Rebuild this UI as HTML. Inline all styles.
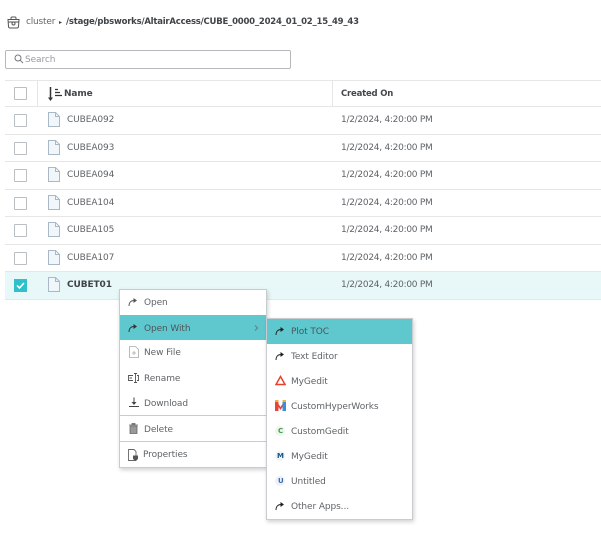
<!DOCTYPE html>
<html><head><meta charset="utf-8"><style>
html,body{margin:0;padding:0;background:#fff}
#p{position:relative;width:601px;height:541px;overflow:hidden;background:#fff;font-family:"DejaVu Sans","Liberation Sans",sans-serif;font-size:9px;color:#5f6468;filter:blur(.3px)}
.a{position:absolute}
.t{position:absolute;white-space:nowrap;line-height:12px;margin-top:1px;letter-spacing:-.1px}
.d{letter-spacing:-.27px}
.l{position:absolute;height:1px;background:#e6e6e6}
.cb{position:absolute;left:14px;width:11px;height:11px;border:1px solid #b9bfc3;border-radius:1px;background:#fff}
svg{position:absolute;overflow:visible}
.menu{position:absolute;background:#fff;border:1px solid #c9cccf;box-shadow:1px 2px 4px rgba(0,0,0,.18)}
.hl{position:absolute;background:#5fc8cf}
</style></head><body><div id="p">
<svg style="left:7px;top:16px" width="13" height="13" viewBox="0 0 13 13" fill="none" stroke="#555" stroke-width="1"><path d="M4 3.500V2.200Q4 1 5 1H8Q9 1 9 2.200V3.500"/><path d="M1 3.500H12L11.500 10.500Q11.400 12 10 12H3Q1.600 12 1.500 10.500z"/><path d="M1 6H12"/><circle cx="6.500" cy="7.500" r="1.500"/></svg>
<div class="t" style="left:26px;top:15px;color:#666;letter-spacing:-.2px">cluster</div>
<div class="t" style="left:59px;top:16px;color:#444;font-size:6px">▸</div>
<div class="t" style="left:66px;top:15px;color:#3f4448;font-weight:bold;font-size:8.500px;letter-spacing:-.22px">/stage/pbsworks/AltairAccess/CUBE_0000_2024_01_02_15_49_43</div>

<div class="a" style="left:5px;top:50px;width:284px;height:17px;border:1px solid #b5b9bc;border-radius:2px"></div>
<svg style="left:14px;top:54px" width="10" height="10" viewBox="0 0 10 10" fill="none" stroke="#777" stroke-width="1"><circle cx="4" cy="4" r="3"/><path d="M6.200 6.200L9 9"/></svg>
<div class="t" style="left:25px;top:53px;color:#9a9a9a">Search</div>

<div class="l" style="left:5px;top:80px;width:596px"></div>
<div class="l" style="left:5px;top:106px;width:596px"></div>
<div class="a" style="left:37px;top:81px;width:1px;height:25px;background:#e6e6e6"></div>
<div class="a" style="left:332px;top:81px;width:1px;height:25px;background:#e6e6e6"></div>
<div class="cb" style="top:87px"></div>
<svg style="left:47px;top:87px" width="17" height="15" viewBox="0 0 17 15" fill="none" stroke="#333" stroke-width="1.500"><path d="M3.500 0V11"/><path d="M1 10.500L3.500 14L6 10.500z" fill="#333" stroke="none"/><path d="M8 2.500h3M8 5.500h5M8 8.500h7" stroke-width="1.200"/></svg>
<div class="t" style="left:64px;top:87px;font-weight:bold;color:#44484c">Name</div>
<div class="t" style="left:341px;top:87px;font-weight:bold;color:#44484c;font-size:8.500px;letter-spacing:-.2px">Created On</div>

<div class="l" style="left:5px;top:134px;width:596px"></div>
<div class="l" style="left:5px;top:161px;width:596px"></div>
<div class="l" style="left:5px;top:189px;width:596px"></div>
<div class="l" style="left:5px;top:216px;width:596px"></div>
<div class="l" style="left:5px;top:244px;width:596px"></div>
<div class="l" style="left:5px;top:271px;width:596px"></div>
<div class="a" style="left:5px;top:272px;width:596px;height:27px;background:#e8f7f8"></div>
<div class="l" style="left:5px;top:299px;width:596px"></div>

<div class="cb" style="top:114px"></div>
<div class="cb" style="top:142px"></div>
<div class="cb" style="top:169px"></div>
<div class="cb" style="top:197px"></div>
<div class="cb" style="top:224px"></div>
<div class="cb" style="top:252px"></div>
<div class="a" style="left:14px;top:279px;width:13px;height:13px;background:#2fc0cc"></div>
<svg style="left:14px;top:279px" width="13" height="13" viewBox="0 0 13 13" fill="none" stroke="#fff" stroke-width="1.600"><path d="M3 6.500L5.500 9L10 4"/></svg>

<svg style="left:48px;top:112px" width="12" height="15" viewBox="0 0 12 15" fill="#f1f6fa" stroke="#a9b8c6" stroke-width="1"><path d="M.5.500H7.500L11.500 4.500V14.500H.5zM7.500.500V4.500H11.500"/></svg>
<svg style="left:48px;top:140px" width="12" height="15" viewBox="0 0 12 15" fill="#f1f6fa" stroke="#a9b8c6" stroke-width="1"><path d="M.5.500H7.500L11.500 4.500V14.500H.5zM7.500.500V4.500H11.500"/></svg>
<svg style="left:48px;top:167px" width="12" height="15" viewBox="0 0 12 15" fill="#f1f6fa" stroke="#a9b8c6" stroke-width="1"><path d="M.5.500H7.500L11.500 4.500V14.500H.5zM7.500.500V4.500H11.500"/></svg>
<svg style="left:48px;top:195px" width="12" height="15" viewBox="0 0 12 15" fill="#f1f6fa" stroke="#a9b8c6" stroke-width="1"><path d="M.5.500H7.500L11.500 4.500V14.500H.5zM7.500.500V4.500H11.500"/></svg>
<svg style="left:48px;top:222px" width="12" height="15" viewBox="0 0 12 15" fill="#f1f6fa" stroke="#a9b8c6" stroke-width="1"><path d="M.5.500H7.500L11.500 4.500V14.500H.5zM7.500.500V4.500H11.500"/></svg>
<svg style="left:48px;top:250px" width="12" height="15" viewBox="0 0 12 15" fill="#f1f6fa" stroke="#a9b8c6" stroke-width="1"><path d="M.5.500H7.500L11.500 4.500V14.500H.5zM7.500.500V4.500H11.500"/></svg>
<svg style="left:48px;top:277px" width="12" height="15" viewBox="0 0 12 15" fill="#f1f6fa" stroke="#a9b8c6" stroke-width="1"><path d="M.5.500H7.500L11.500 4.500V14.500H.5zM7.500.500V4.500H11.500"/></svg>

<div class="t" style="left:67px;top:113px">CUBEA092</div><div class="t d" style="left:341px;top:113px">1/2/2024, 4:20:00 PM</div>
<div class="t" style="left:67px;top:141px">CUBEA093</div><div class="t d" style="left:341px;top:141px">1/2/2024, 4:20:00 PM</div>
<div class="t" style="left:67px;top:168px">CUBEA094</div><div class="t d" style="left:341px;top:168px">1/2/2024, 4:20:00 PM</div>
<div class="t" style="left:67px;top:196px">CUBEA104</div><div class="t d" style="left:341px;top:196px">1/2/2024, 4:20:00 PM</div>
<div class="t" style="left:67px;top:223px">CUBEA105</div><div class="t d" style="left:341px;top:223px">1/2/2024, 4:20:00 PM</div>
<div class="t" style="left:67px;top:251px">CUBEA107</div><div class="t d" style="left:341px;top:251px">1/2/2024, 4:20:00 PM</div>
<div class="t" style="left:67px;top:278px;font-weight:bold;color:#3f4448">CUBET01</div><div class="t d" style="left:341px;top:278px">1/2/2024, 4:20:00 PM</div>

<div class="menu" style="left:119px;top:289px;width:146px;height:177px"></div>
<div class="hl" style="left:120px;top:315px;width:146px;height:25px"></div>
<div class="a" style="left:120px;top:415px;width:146px;height:1px;background:#c9cccf"></div>
<div class="a" style="left:120px;top:441px;width:146px;height:1px;background:#c9cccf"></div>

<svg style="left:128px;top:297px" width="9" height="9" viewBox="0 0 9 9" fill="none" stroke="#555" stroke-width="1"><path d="M1 9C1 5.500 3 3.500 6 3.500"/><path d="M5.500 1L9 3.500L5.500 6z" fill="#555" stroke="none"/></svg>
<div class="t" style="left:144px;top:296px">Open</div>
<svg style="left:128px;top:323px" width="9" height="9" viewBox="0 0 9 9" fill="none" stroke="#333" stroke-width="1"><path d="M1 9C1 5.500 3 3.500 6 3.500"/><path d="M5.500 1L9 3.500L5.500 6z" fill="#333" stroke="none"/></svg>
<div class="t" style="left:144px;top:322px;color:#4b5559">Open With</div>
<svg style="left:254px;top:325px" width="4" height="6" viewBox="0 0 4 6" fill="none" stroke="#666" stroke-width=".8"><path d="M1 .5L3.500 3L1 5.500"/></svg>
<svg style="left:129px;top:346px" width="10" height="12" viewBox="0 0 10 12" fill="none" stroke="#aaa" stroke-width=".8"><path d="M.5.500H6.500L9.500 3.500V11.500H.5zM3 7h4M5 5v4"/></svg>
<div class="t" style="left:144px;top:346px">New File</div>
<svg style="left:128px;top:373px" width="11" height="10" viewBox="0 0 11 10" fill="none" stroke="#555" stroke-width=".9"><path d="M5 2.500H.5V7.500H5M1.500 5H4M6 .5h3M6 9.500h3M7.500.5v9M9 2.500h1.500V7.500H9"/></svg>
<div class="t" style="left:144px;top:372px">Rename</div>
<svg style="left:129px;top:397px" width="10" height="11" viewBox="0 0 10 11" fill="none" stroke="#444" stroke-width="1"><path d="M5 .5V7M0 9.500H10"/><path d="M2.500 5L5 8L7.500 5z" fill="#444" stroke="none"/></svg>
<div class="t" style="left:144px;top:397px">Download</div>
<svg style="left:129px;top:423px" width="9" height="11" viewBox="0 0 9 11" fill="#888" stroke="#666" stroke-width=".8"><path d="M0 2H9M3 2V.5H6V2"/><path d="M1 3H8V10.500H1z" fill="#999"/></svg>
<div class="t" style="left:144px;top:423px">Delete</div>
<svg style="left:128px;top:449px" width="11" height="12" viewBox="0 0 11 12" fill="none" stroke="#666" stroke-width=".9"><path d="M.5.500H6L8 2.500V11.500H.5z"/><path d="M5 6.500H10V10L7.500 12L5 10z" fill="#555" stroke="none"/></svg>
<div class="t" style="left:143px;top:448px">Properties</div>

<div class="menu" style="left:266px;top:318px;width:145px;height:200px"></div>
<div class="hl" style="left:267px;top:319px;width:145px;height:25px"></div>
<svg style="left:275px;top:326px" width="9" height="9" viewBox="0 0 9 9" fill="none" stroke="#222" stroke-width="1"><path d="M1 9C1 5.500 3 3.500 6 3.500"/><path d="M5.500 1L9 3.500L5.500 6z" fill="#222" stroke="none"/></svg>
<div class="t" style="left:291px;top:325px;color:#4b5559">Plot TOC</div>
<svg style="left:275px;top:351px" width="9" height="9" viewBox="0 0 9 9" fill="none" stroke="#222" stroke-width="1"><path d="M1 9C1 5.500 3 3.500 6 3.500"/><path d="M5.500 1L9 3.500L5.500 6z" fill="#222" stroke="none"/></svg>
<div class="t" style="left:291px;top:350px">Text Editor</div>
<svg style="left:275px;top:375px" width="11" height="11" viewBox="0 0 11 11" fill="none" stroke="#e8432a" stroke-width="1.500"><path d="M5.500 1.500L10 9.500H1z"/></svg>
<div class="t" style="left:291px;top:375px">MyGedit</div>
<svg style="left:275px;top:400px" width="11" height="12" viewBox="0 0 11 12"><rect x="0" y="1" width="3.500" height="10" fill="#e8443a"/><rect x="7.500" y="1" width="3.500" height="10" fill="#3a8fd8"/><path d="M3.500 4L5.500 7L7.500 4V7L5.500 10L3.500 7z" fill="#e8443a"/><rect x="0" y="0" width="3.500" height="2" fill="#f2b13c"/><rect x="7.500" y="0" width="3.500" height="2" fill="#f2b13c"/></svg>
<div class="t" style="left:291px;top:400px">CustomHyperWorks</div>
<div class="a" style="left:275px;top:426px;width:10px;height:10px;border-radius:50%;background:#eef5ee"></div>
<div class="t" style="left:278px;top:424px;font-size:7px;font-weight:bold;color:#3d9a48">C</div>
<div class="t" style="left:291px;top:425px">CustomGedit</div>
<div class="a" style="left:275px;top:451px;width:10px;height:10px;border-radius:50%;background:#eef3f7"></div>
<div class="t" style="left:277px;top:449px;font-size:7px;font-weight:bold;color:#17577f">M</div>
<div class="t" style="left:291px;top:450px">MyGedit</div>
<div class="a" style="left:275px;top:476px;width:10px;height:10px;border-radius:50%;background:#eef1f8"></div>
<div class="t" style="left:278px;top:474px;font-size:7px;font-weight:bold;color:#3c6cb4">U</div>
<div class="t" style="left:291px;top:475px">Untitled</div>
<svg style="left:275px;top:501px" width="9" height="9" viewBox="0 0 9 9" fill="none" stroke="#222" stroke-width="1"><path d="M1 9C1 5.500 3 3.500 6 3.500"/><path d="M5.500 1L9 3.500L5.500 6z" fill="#222" stroke="none"/></svg>
<div class="t" style="left:291px;top:500px">Other Apps...</div>
</div></body></html>
